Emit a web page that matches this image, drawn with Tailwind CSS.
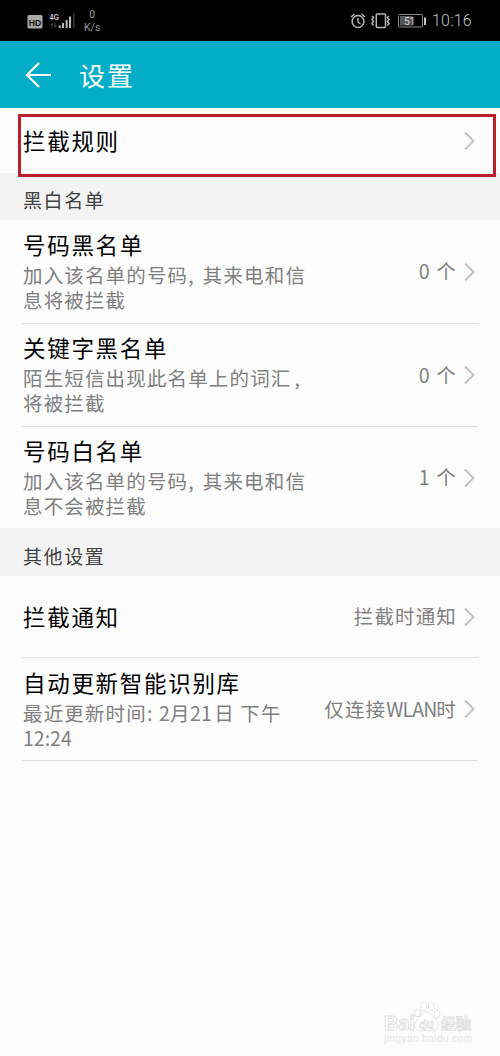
<!DOCTYPE html>
<html lang="zh-CN">
<head>
<meta charset="utf-8">
<title>设置</title>
<script src="https://cdn.jsdelivr.net/npm/@tailwindcss/browser@4"></script>
</head>
<body class="bg-[#fcfcfc] font-['Noto_Sans_CJK_SC',sans-serif]">
<svg class="hidden"><symbol id="chev" viewBox="0 0 11 20"><path d="M1 1.500 9.500 10 1 18.500" fill="none" stroke="#c2c2c2" stroke-width="2"/></symbol></svg>
<div class="relative flex h-[1056px] w-[500px] flex-col overflow-hidden">
  <header class="flex h-[41px] shrink-0 items-start justify-between bg-black pr-[27px] pl-[27px] text-[#b5b5b5]">
    <div class="flex">
      <svg class="h-[41px] w-[50px]" viewBox="27 0 50 41">
        <rect x="27.500" y="15" width="15" height="13.500" rx="1.500" fill="#a8a8a8"/>
        <text x="28.800" y="25.500" font-family="Liberation Sans" font-weight="bold" font-size="9.500" textLength="12.500" lengthAdjust="spacingAndGlyphs" fill="#111">HD</text>
        <text x="49.500" y="20" font-family="Liberation Sans" font-weight="bold" font-size="8.500" textLength="9.500" lengthAdjust="spacingAndGlyphs" fill="#c4c4c4">4G</text>
        <path d="M52 27.500v-4l-1.300 1.500M55 23v4l1.300-1.500" stroke="#555" fill="none"/>
        <path d="M59.800 28v-2.500M63 28v-5M66.600 28v-8M70 28V16.500" stroke="#b8b8b8" stroke-width="2"/>
        <path d="M73.800 28V13" stroke="#383838" stroke-width="1.500"/>
      </svg>
      <div class="ml-[7px] pt-[8px] text-center font-['Roboto'] text-[10.500px] leading-[13px] text-[#999]">0<br>K/s</div>
    </div>
    <div class="flex">
      <svg class="h-[41px] w-[78px]" viewBox="350 0 78 41" fill="none" stroke="#b5b5b5">
        <circle cx="359" cy="21.500" r="5.900" stroke-width="1.500"/>
        <path d="M359 18v4l2.500 2M352 17l3.500-3M366 17l-3.500-3" stroke-width="1.400"/>
        <rect x="377.300" y="14" width="9.200" height="13.500" rx="1" stroke-width="1.500"/>
        <path d="M373 16l1.500 1.500-1.500 2 1.500 2-1.500 2 1.500 2M390 16l-1.500 1.500 1.500 2-1.500 2 1.500 2-1.500 2" stroke-width="1.500"/>
        <rect x="399.500" y="14.500" width="24" height="12.500" rx="1" stroke="#8c8c8c"/>
        <rect x="401" y="16" width="12.500" height="9.500" fill="#555" stroke="none"/>
        <path d="M426 17.500v7.500" stroke="#ddd" stroke-width="1.800"/>
        <text x="405" y="24.800" font-family="Roboto" font-size="10.500" textLength="11.500" fill="#d0d0d0" stroke="none">51</text>
      </svg>
      <span class="mt-[11px] ml-[5px] w-[41px] font-['Roboto'] text-[16px] leading-5 font-light tracking-[0.200px] whitespace-nowrap text-[#c4c4c4]">10:16</span>
    </div>
  </header>
  <nav class="flex h-[67px] shrink-0 items-center bg-[#02adc7] pl-[25px] text-white">
    <svg class="h-[26px] w-[26px]" viewBox="0 0 26 26" fill="none" stroke="currentColor" stroke-width="2.200"><path d="M26 13H2M14 1 2 13l12 12"/></svg>
    <h1 class="ml-[28px] text-[26px] leading-9 tracking-[2px]">设置</h1>
  </nav>
  <main class="flex flex-col text-[19.500px] leading-[24.500px] tracking-[1.150px] text-[#808080]">
    <div class="flex h-[65px] items-center justify-between pr-[25px] pl-[23px]">
      <h2 class="-mt-[2px] text-[22.500px] leading-7 tracking-[1.700px] text-black">拦截规则</h2>
      <svg class="h-5 w-[11px]"><use href="#chev"/></svg>
    </div>
    <h3 class="h-[47px] bg-[#f3f3f3] pt-[15px] pl-[23px] text-[19px] tracking-[1.600px] text-[#404040]">黑白名单</h3>
    <section class="px-[22px]">
      <div class="flex h-[104px] items-center justify-between border-b border-[#e2e2e2] pr-[3px]">
        <div class="h-full pt-[10px] pl-px"><h2 class="mb-[5px] text-[22.500px] leading-7 tracking-[1.700px] text-black">号码黑名单</h2><p class="whitespace-nowrap">加入该名单的号码<span class="mr-[8px]">,</span>其来电和信<br>息将被拦截</p></div>
        <div class="flex items-center"><span class="mr-[7px]">0 个</span><svg class="h-5 w-[11px]"><use href="#chev"/></svg></div>
      </div>
      <div class="flex h-[103px] items-center justify-between border-b border-[#e2e2e2] pr-[3px]">
        <div class="h-full pt-[9px] pl-px"><h2 class="mb-[5px] text-[22.500px] leading-7 tracking-[1.700px] text-black">关键字黑名单</h2><p class="whitespace-nowrap">陌生短信出现此名单上的词汇<span class="ml-[3px]">,</span><br>将被拦截</p></div>
        <div class="flex items-center"><span class="mr-[7px]">0 个</span><svg class="h-5 w-[11px]"><use href="#chev"/></svg></div>
      </div>
      <div class="flex h-[101px] items-center justify-between pr-[3px]">
        <div class="h-full pt-[9px] pl-px"><h2 class="mb-[5px] text-[22.500px] leading-7 tracking-[1.700px] text-black">号码白名单</h2><p class="whitespace-nowrap">加入该名单的号码<span class="mr-[8px]">,</span>其来电和信<br>息不会被拦截</p></div>
        <div class="flex items-center"><span class="mr-[7px]">1 个</span><svg class="h-5 w-[11px]"><use href="#chev"/></svg></div>
      </div>
    </section>
    <h3 class="h-[48px] bg-[#f3f3f3] pt-[16px] pl-[23px] text-[19px] tracking-[1.600px] text-[#404040]">其他设置</h3>
    <section class="px-[22px]">
      <div class="flex h-[82px] items-center justify-between border-b border-[#e2e2e2] pr-[3px] pl-px">
        <h2 class="-mt-[2px] text-[22.500px] leading-7 tracking-[1.700px] text-black">拦截通知</h2>
        <div class="flex items-center"><span class="mr-[7px]">拦截时通知</span><svg class="h-5 w-[11px]"><use href="#chev"/></svg></div>
      </div>
      <div class="flex h-[103px] items-center justify-between border-b border-[#e2e2e2] pr-[3px]">
        <div class="h-full pt-[10px] pl-px"><h2 class="mb-[5px] text-[22.500px] leading-7 tracking-[1.700px] text-black">自动更新智能识别库</h2><p class="whitespace-nowrap">最近更新时间: <span class="tracking-[0.300px]">2月21</span><span class="ml-[2px]">日</span> 下午<br><span class="tracking-[0px]">12:24</span></p></div>
        <div class="flex items-center"><span class="mr-[7px]">仅连接<span class="tracking-[-0.900px]">WLAN</span>时</span><svg class="h-5 w-[11px]"><use href="#chev"/></svg></div>
      </div>
    </section>
  </main>
  <div class="absolute top-[114px] left-[18px] h-[63px] w-[478px] border-3 border-[#b9202c]"></div>
  <svg class="absolute top-[996px] left-[380px] h-[50px] w-[100px]" viewBox="380 996 100 50" fill="#fff" stroke="#dedede" stroke-width=".9">
    <g font-family="Liberation Sans" font-weight="bold">
      <text x="384" y="1030" font-size="21" textLength="31" lengthAdjust="spacingAndGlyphs">Bai</text>
      <ellipse cx="417.500" cy="1013" rx="3" ry="4"/><ellipse cx="423.500" cy="1006.500" rx="3" ry="4.300"/><ellipse cx="431.500" cy="1006.500" rx="3" ry="4.300"/><ellipse cx="437" cy="1014" rx="3" ry="4"/>
      <path d="M427 1012c4 0 5 4 8 7 6 5 3 12-2 12-3 0-9-1-12 0-6 0-9-6-3-12 4-3 5-7 9-7z"/>
      <text x="419" y="1029" font-size="13" textLength="15" lengthAdjust="spacingAndGlyphs">du</text>
    </g>
    <text x="441" y="1029" font-family="Noto Sans CJK SC" font-weight="bold" font-size="15" textLength="30">经验</text>
    <text x="384" y="1042" font-family="Liberation Sans" font-size="10" textLength="88" fill="#e6e6e6" stroke="none">jingyan.baidu.com</text>
  </svg>
</div>
</body>
</html>
